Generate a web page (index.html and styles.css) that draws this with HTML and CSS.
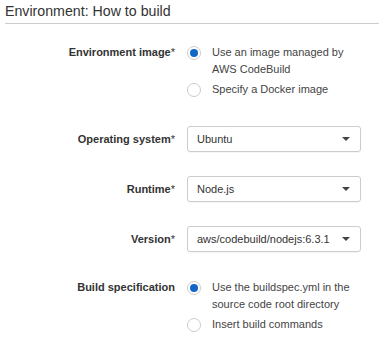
FILE: index.html
```html
<!DOCTYPE html>
<html><head><meta charset="UTF-8" /><link rel="stylesheet" href="styles.css"></head>
<body>
<div class="panel">
	<h2 class="title">Environment: How to build</h2>
	<div class="form">
		<div class="row top">
			<div class="label">Environment image<span class="req">*</span></div>
			<div class="options">
				<div class="option"><span class="radio on"></span><span>Use an image managed by<br>AWS CodeBuild</span></div>
				<div class="option"><span class="radio"></span><span>Specify a Docker image</span></div>
			</div>
		</div>
		<div class="row">
			<div class="label">Operating system<span class="req">*</span></div>
			<div class="select">Ubuntu<span class="caret"></span></div>
		</div>
		<div class="row">
			<div class="label">Runtime<span class="req">*</span></div>
			<div class="select">Node.js<span class="caret"></span></div>
		</div>
		<div class="row">
			<div class="label">Version<span class="req">*</span></div>
			<div class="select">aws/codebuild/nodejs:6.3.1<span class="caret"></span></div>
		</div>
		<div class="row top spec">
			<div class="label">Build specification</div>
			<div class="options">
				<div class="option"><span class="radio on"></span><span>Use the buildspec.yml in the<br>source code root directory</span></div>
				<div class="option"><span class="radio"></span><span>Insert build commands</span></div>
			</div>
		</div>
	</div>
</div>
</body></html>
```
FILE: styles.css
```css
body { margin: 0; background: #fff; font-family: "Liberation Sans", Arial, sans-serif; color: #444; }
.panel { padding-left: 5px; }
.title { margin: 0; padding-top: 3px; height: 20px; font-size: 14.2px; line-height: 17px; font-weight: normal; color: #333; border-bottom: 1px solid #ccc; }

.form { display: flex; flex-direction: column; padding-top: 20px; }
.row { display: grid; grid-template-columns: 170px 174px; column-gap: 12px; align-items: center; margin-bottom: 24px; }
.row.top { align-items: start; margin-bottom: 28px; }
.row.spec { margin-top: 3px; }

.label { text-align: right; font-size: 11px; font-weight: bold; line-height: 17px; color: #333; }
.req { font-weight: normal; }

.options { display: flex; flex-direction: column; gap: 3px; font-size: 11px; line-height: 17px; }
.option { display: flex; align-items: flex-start; }
.radio { flex: none; box-sizing: border-box; width: 14px; height: 14px; margin: 1.5px 11px 0 0; border: 1px solid #ccc; border-radius: 50%; background: #fff; position: relative; }
.radio.on::after { content: ""; position: absolute; left: 2px; top: 2px; width: 8px; height: 8px; border-radius: 50%; background: #1166c8; }

.select { box-sizing: border-box; height: 26px; display: flex; align-items: center; justify-content: space-between; padding: 0 10px 0 9px; border: 1px solid #ccc; border-radius: 3px; font-size: 11px; color: #333; box-shadow: 0 1px 1px rgba(0,0,0,0.04); }
.caret { width: 0; height: 0; border-left: 4px solid transparent; border-right: 4px solid transparent; border-top: 4px solid #444; }
```
